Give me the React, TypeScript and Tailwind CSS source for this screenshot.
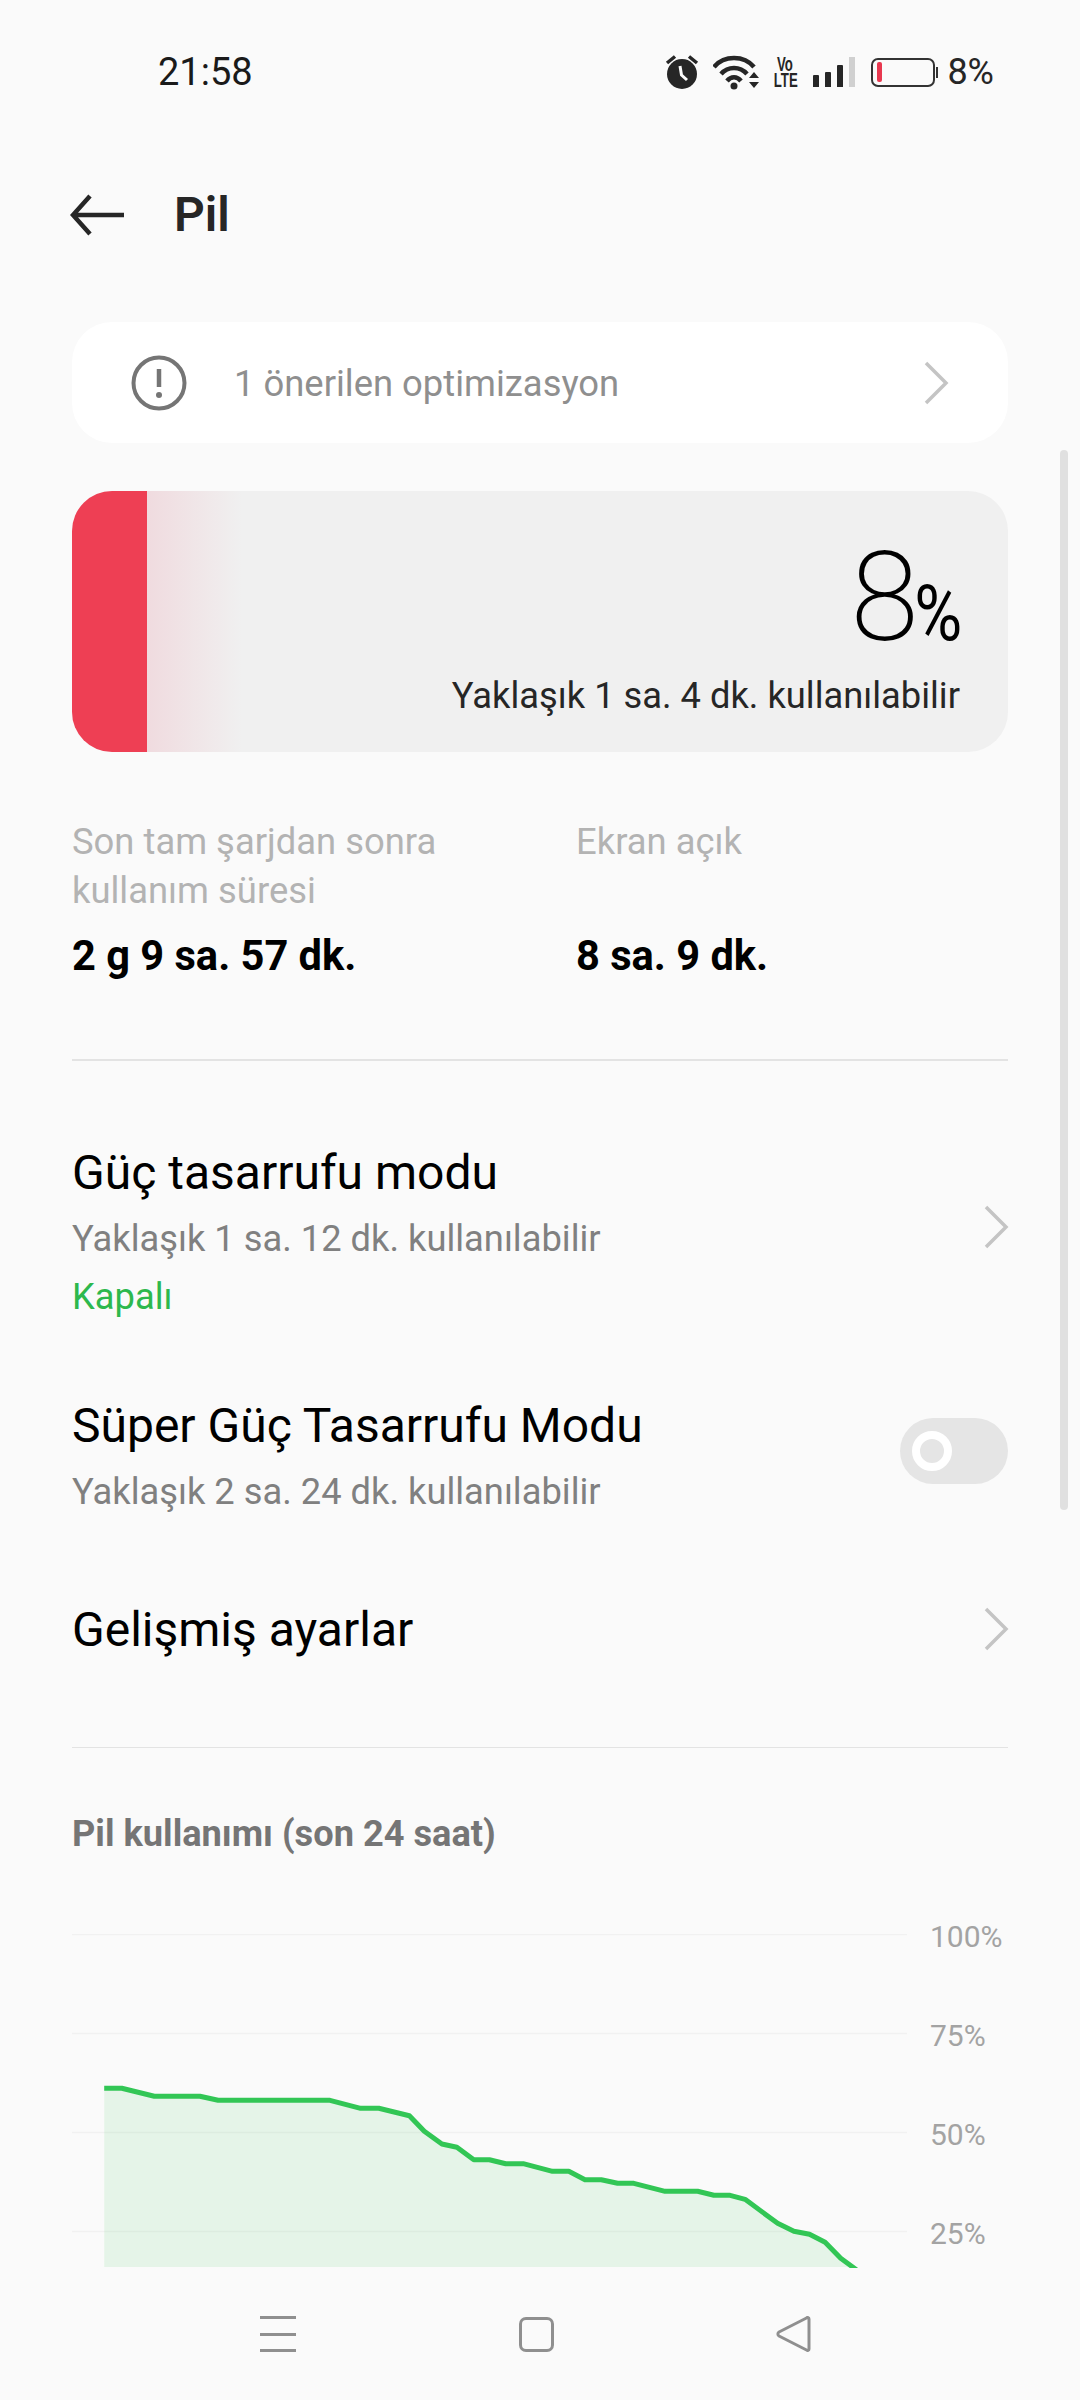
import React from 'react';

const font = { fontFamily: 'Roboto, "Noto Sans", sans-serif' };

// zoom coordinates read from the reference, mapped to the chart's svg box
const rawPoints: [number, number][] = [
  [68, 568], [95, 568], [145, 592], [215, 592], [243, 604], [415, 604], [462, 628], [490, 628],
  [537, 650], [560, 697], [587, 735], [610, 745], [636, 782], [660, 782], [685, 794], [712, 794],
  [757, 817], [782, 817], [807, 842], [832, 842], [857, 853], [882, 853], [930, 877], [980, 877],
  [1005, 889], [1030, 889], [1053, 901], [1103, 973], [1128, 997], [1152, 1006], [1176, 1030],
  [1200, 1078], [1224, 1112],
];
const points = rawPoints.map(([x, y]) => [60 + x / 1.537 - 72, y / 3 + 1900 - 1935] as const);
const line = points.map(([x, y]) => `${x.toFixed(1)},${y.toFixed(1)}`).join(' ');
const area = `${points[0][0].toFixed(1)},333 ${line} ${points[points.length - 1][0].toFixed(1)},333`;

function Chevron({ color = '#c4c4c4' }: { color?: string }) {
  return (
    <svg width="26" height="44" viewBox="0 0 26 44" fill="none" className="-mr-[1px]">
      <path d="M3 2 L23 22 L3 42" stroke={color} strokeWidth="3.5" />
    </svg>
  );
}

function StatusIcons() {
  return (
    <div className="flex items-center">
      <svg width="36" height="38" viewBox="0 0 36 38">
        <circle cx="18" cy="21" r="15" fill="#262626" />
        <path d="M16 13 L17.5 22 L23 27" fill="none" stroke="#fafafa" strokeWidth="3" />
        <path d="M3 10 L11 3.5 M33 10 L25 3.5" stroke="#262626" strokeWidth="3.5" />
      </svg>
      <svg width="48" height="36" viewBox="0 0 48 36" className="ml-[13px]">
        <path d="M1 13 C11 1 31 1 41 13" fill="none" stroke="#262626" strokeWidth="4.5" />
        <path d="M8 20 C15 12 27 12 34 20" fill="none" stroke="#262626" strokeWidth="4.5" />
        <path d="M14 27 C18 22 24 22 28 27" fill="none" stroke="#262626" strokeWidth="4.5" />
        <circle cx="21" cy="32" r="3.5" fill="#262626" />
        <path d="M36 24 L41 18 L46 24 Z M36 28 L46 28 L41 34 Z" fill="#262626" />
      </svg>
      <div className="ml-[13px] w-[22px]" style={{ fontFamily: '"Liberation Sans", sans-serif' }}>
        <span className="-mx-[6px] block w-[34px] scale-x-[0.66] text-center text-[20px] leading-[16px] font-bold text-[#262626]">Vo LTE</span>
      </div>
      <div className="ml-[17px] flex h-[30px] items-end gap-[6px]">
        <div className="h-[12px] w-[6px] rounded-t-[1px] bg-[#262626]" />
        <div className="h-[15px] w-[6px] rounded-t-[1px] bg-[#262626]" />
        <div className="h-[22px] w-[6px] rounded-t-[1px] bg-[#262626]" />
        <div className="h-[30px] w-[6px] bg-[#d0d0d0]" />
      </div>
      <div className="ml-[16px] flex items-center">
        <div className="flex h-[29px] w-[64px] items-center rounded-[7px] border-[2.5px] border-[#333333] pl-[4px]">
          <div className="h-[20px] w-[5px] rounded-[2px] bg-[#e8384f]" />
        </div>
        <div className="ml-[1px] h-[11px] w-[2px] bg-[#333333]" />
      </div>
      <span className="ml-[9px] text-[36px] leading-[40px] text-[#262626]">8%</span>
    </div>
  );
}

function NavBar() {
  return (
    <div className="flex h-[132px] items-center">
      <div className="ml-[260px] flex h-[36px] w-[36px] flex-col justify-between">
        <div className="h-[3px] bg-[#8f8f8f]" />
        <div className="h-[3px] bg-[#8f8f8f]" />
        <div className="h-[3px] bg-[#8f8f8f]" />
      </div>
      <div className="ml-[223px] h-[35px] w-[35px] rounded-[7px] border-[3px] border-[#8f8f8f]" />
      <svg width="36" height="36" viewBox="0 0 36 36" className="ml-[222px]" fill="none">
        <path d="M33 3 C33 1.5 31.5 1 30.5 2 L3 16 C1.5 17 1.5 19 3 20 L30.5 34 C31.5 35 33 34.5 33 33 Z" stroke="#8f8f8f" strokeWidth="3" strokeLinejoin="round" />
      </svg>
    </div>
  );
}

export default function App() {
  return (
    <div className="relative h-[2400px] w-[1080px] overflow-hidden bg-[#fafafa]" style={font}>
      {/* scrollbar */}
      <div className="absolute top-[450px] left-[1060px] h-[1060px] w-[8px] rounded-full bg-[#e0e0e0]" />

      <div className="flex h-[144px] items-center justify-between pr-[86px] pl-[158px]">
        <span className="text-[38px] leading-[40px] text-[#1a1a1a]">21:58</span>
        <StatusIcons />
      </div>

      <div className="flex h-[142px] items-center pl-[70px]">
        <svg width="54" height="42" viewBox="0 0 54 42" fill="none">
          <path d="M54 21 H4 M20 2 L3 21 L20 40" stroke="#262626" strokeWidth="4.5" />
        </svg>
        <h1 className="ml-[50px] text-[48px] leading-[60px] font-semibold text-[#262626]">Pil</h1>
      </div>

      <div className="mx-[72px] mt-[36px] flex h-[121px] items-center rounded-[40px] bg-white pr-[60px] pl-[59px]">
        <svg width="56" height="56" viewBox="0 0 56 56" fill="none">
          <circle cx="28" cy="28" r="25.5" stroke="#757575" strokeWidth="4" />
          <path d="M28 14 V32" stroke="#757575" strokeWidth="4.5" />
          <circle cx="28" cy="40" r="3" fill="#757575" />
        </svg>
        <span className="mt-[2px] ml-[47px] flex-1 text-[36.4px] leading-[48px] text-[#8f8f8f]">1 önerilen optimizasyon</span>
        <Chevron />
      </div>

      <div className="relative mx-[72px] mt-[48px] flex h-[261px] overflow-hidden rounded-[40px] bg-[#f0f0f0]">
        <div className="h-full w-[75px] bg-[#ee3f54]" />
        <div className="h-full w-[95px] bg-gradient-to-r from-[#f0dbdf] to-[#f0f0f0]" />
        <div className="flex flex-1 flex-col items-end pt-[42px] pr-[48px]">
          <div className="flex items-baseline">
            <span className="inline-block text-[124px] leading-[130px] font-extralight tracking-[-5px] text-black">8</span>
            <span className="-mr-[2px] -ml-[9px] inline-block origin-right scale-x-[0.84] text-[78px] leading-[60px] text-black">%</span>
          </div>
          <span className="mt-[9px] text-[36.3px] leading-[48px] text-[#262626]">Yaklaşık 1 sa. 4 dk. kullanılabilir</span>
        </div>
      </div>

      <div className="mx-[72px] mt-[65px] flex">
        <div className="w-[504px]">
          <p className="text-[36.4px] leading-[49px] text-[#b3b3b3]">Son tam şarjdan sonra<br />kullanım süresi</p>
          <p className="mt-[13px] text-[41.6px] leading-[56px] font-bold text-black">2 g 9 sa. 57 dk.</p>
        </div>
        <div>
          <p className="h-[98px] text-[36.4px] leading-[49px] text-[#b3b3b3]">Ekran açık</p>
          <p className="mt-[13px] text-[41.6px] leading-[56px] font-bold text-black">8 sa. 9 dk.</p>
        </div>
      </div>

      <div className="mx-[72px] mt-[75px] h-[1.5px] bg-[#e3e3e3]" />

      <div className="mx-[72px] mt-[82px] flex items-center justify-between">
        <div>
          <p className="text-[48px] leading-[60px] text-black">Güç tasarrufu modu</p>
          <p className="mt-[12px] text-[36.3px] leading-[48px] text-[#808080]">Yaklaşık 1 sa. 12 dk. kullanılabilir</p>
          <p className="mt-[10px] text-[36.3px] leading-[48px] text-[#2db84d]">Kapalı</p>
        </div>
        <div className="mb-[10px] flex">
          <Chevron />
        </div>
      </div>

      <div className="mx-[72px] mt-[75px] flex items-center justify-between">
        <div>
          <p className="text-[48px] leading-[60px] text-black">Süper Güç Tasarrufu Modu</p>
          <p className="mt-[12px] text-[36.3px] leading-[48px] text-[#808080]">Yaklaşık 2 sa. 24 dk. kullanılabilir</p>
        </div>
        <div className="mb-[9px] flex h-[66px] w-[108px] items-center rounded-full bg-[#e5e5e5] pl-[12px]">
          <div className="h-[40px] w-[40px] rounded-full border-[8px] border-white" />
        </div>
      </div>

      <div className="mx-[72px] mt-[84px] flex items-center justify-between">
        <p className="text-[48px] leading-[60px] text-black">Gelişmiş ayarlar</p>
        <div className="mb-[2px] flex">
          <Chevron />
        </div>
      </div>

      <div className="mx-[72px] mt-[87px] h-[1.5px] bg-[#e3e3e3]" />

      <p className="mx-[72px] mt-[62px] text-[36.2px] leading-[48px] font-bold text-[#757575]">Pil kullanımı (son 24 saat)</p>

      <div className="mx-[72px] mt-[61px] flex h-[349px] items-start overflow-hidden">
        <svg width="835" height="334" viewBox="0 0 835 334" className="mt-[15px] shrink-0">
          {[0, 99, 198, 297].map(y => (
            <line key={y} x1="0" x2="835" y1={y + 0.5} y2={y + 0.5} stroke="#f1f1f1" strokeWidth="1.5" />
          ))}
          <polygon points={area} fill="#2fc653" fillOpacity="0.1" />
          <polyline points={line} fill="none" stroke="#32c655" strokeWidth="5" strokeLinejoin="round" />
        </svg>
        <div className="ml-[23px] flex flex-col text-[30px] leading-[36px] text-[#a3a3a3]">
          <span className="h-[99px]">100%</span>
          <span className="h-[99px]">75%</span>
          <span className="h-[99px]">50%</span>
          <span className="h-[51px]">25%</span>
        </div>
      </div>

      <NavBar />
    </div>
  );
}
